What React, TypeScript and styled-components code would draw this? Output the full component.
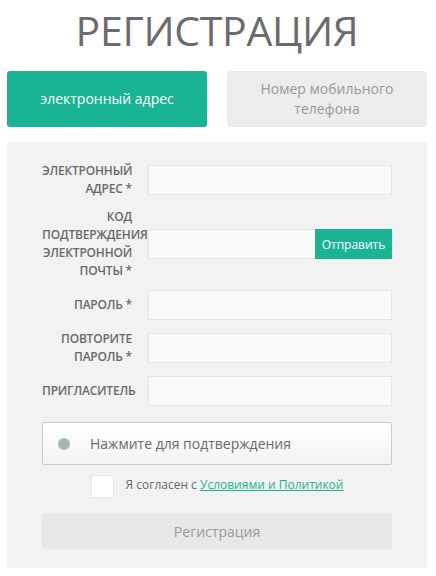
import styled, { createGlobalStyle } from "styled-components";

const GlobalStyle = createGlobalStyle`
    html, body {
        margin: 0;
        padding: 0;
        background: #ffffff;
    }
    body {
        font-family: "Open Sans", "Liberation Sans", sans-serif;
        color: #676a6c;
    }
    * {
        box-sizing: border-box;
    }
`;

const Page = styled.div`
    width: 436px;
    padding: 0 9px 0 7px;
`;

const Title = styled.h1`
    margin: 0;
    padding-top: 5px;
    height: 71px;
    text-align: center;
    font-size: 41px;
    font-weight: 400;
    line-height: 50px;
    letter-spacing: -0.3px;
    color: #6a6b6c;
`;

const Tabs = styled.div`
    display: grid;
    grid-template-columns: 200px 200px;
    column-gap: 20px;
`;

const Tab = styled.button<{ $active?: boolean }>`
    height: 56px;
    border: none;
    border-radius: 3px;
    padding: 0 20px;
    font-family: inherit;
    font-size: 14px;
    line-height: 20px;
    background: ${p => (p.$active ? "#1ab394" : "#ededed")};
    color: ${p => (p.$active ? "#ffffff" : "#999999")};
`;

const Panel = styled.div`
    margin-top: 15px;
    background: #f2f2f2;
    border-radius: 3px;
    padding: 20px 35px 19px 35px;
`;

const Form = styled.div`
    display: flex;
    flex-direction: column;
    width: 350px;
`;

const Row = styled.div`
    display: grid;
    grid-template-columns: 90px 244px;
    column-gap: 16px;
    align-items: center;
    margin-bottom: 10px;
`;

const Label = styled.label`
    text-align: right;
    font-size: 12px;
    font-weight: 600;
    line-height: 18px;
    letter-spacing: -0.2px;
    color: #676a6c;
    text-transform: uppercase;
`;

const Input = styled.input`
    height: 30px;
    width: 100%;
    border: 1px solid #e5e6e7;
    background: #fafafa;
    padding: 4px 8px;
    font-family: inherit;
    font-size: 13px;
    outline: none;
`;

const Group = styled.div`
    display: flex;
`;

const GroupInput = styled(Input)`
    flex: 1;
    width: auto;
    min-width: 0;
    border-right: none;
`;

const SendButton = styled.button`
    width: 77px;
    height: 30px;
    border: none;
    background: #1ab394;
    color: #ffffff;
    font-family: inherit;
    font-size: 12px;
    padding: 0;
`;

const Captcha = styled.button`
    margin-top: 6px;
    height: 43px;
    width: 100%;
    display: flex;
    align-items: center;
    gap: 20px;
    padding: 0 0 0 15px;
    border: 1px solid #cccccc;
    border-radius: 2px;
    background: linear-gradient(to bottom, #ffffff, #f3f3f3);
    font-family: inherit;
    font-size: 14px;
    color: #676a6c;
`;

const Dot = styled.span`
    width: 12px;
    height: 12px;
    border-radius: 50%;
    background: #a9b4b8;
`;

const Agree = styled.div`
    display: flex;
    align-items: center;
    justify-content: center;
    gap: 12px;
    margin-top: 10px;
`;

const Box = styled.span`
    width: 23px;
    height: 23px;
    background: #ffffff;
    border: 1px solid #e5e6e7;
`;

const AgreeText = styled.span`
    font-size: 12px;
    color: #676a6c;
    padding-bottom: 5px;
`;

const TermsLink = styled.a`
    color: #1ab394;
    text-decoration: underline;
`;

const Submit = styled.button`
    margin-top: 15px;
    height: 36px;
    width: 100%;
    border: none;
    border-radius: 3px;
    background: #e8e8e8;
    color: #999999;
    font-family: inherit;
    font-size: 14px;
`;

function App() {
    return (
        <Page>
            <GlobalStyle />
            <Title>РЕГИСТРАЦИЯ</Title>
            <Tabs>
                <Tab $active>электронный адрес</Tab>
                <Tab>Номер мобильного телефона</Tab>
            </Tabs>
            <Panel>
                <Form>
                    <Row>
                        <Label>Электронный адрес *</Label>
                        <Input />
                    </Row>
                    <Row>
                        <Label>Код подтверждения электронной почты *</Label>
                        <Group>
                            <GroupInput />
                            <SendButton>Отправить</SendButton>
                        </Group>
                    </Row>
                    <Row>
                        <Label>Пароль *</Label>
                        <Input type="password" />
                    </Row>
                    <Row>
                        <Label>Повторите пароль *</Label>
                        <Input type="password" />
                    </Row>
                    <Row>
                        <Label>Пригласитель</Label>
                        <Input />
                    </Row>
                    <Captcha>
                        <Dot />
                        Нажмите для подтверждения
                    </Captcha>
                    <Agree>
                        <Box />
                        <AgreeText>
                            Я согласен с <TermsLink href="#">Условиями и Политикой</TermsLink>
                        </AgreeText>
                    </Agree>
                    <Submit>Регистрация</Submit>
                </Form>
            </Panel>
        </Page>
    );
}

export default App;
